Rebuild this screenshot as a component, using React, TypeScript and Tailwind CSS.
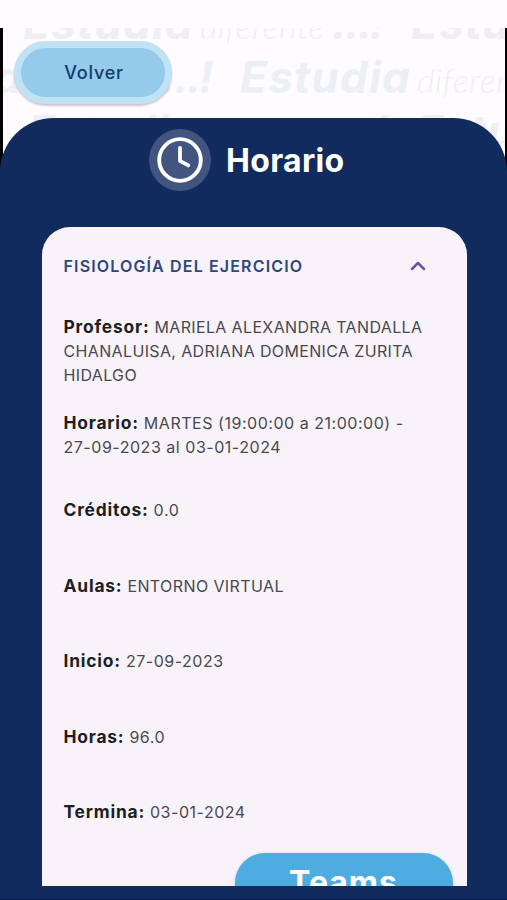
import React from "react";
import { ChevronUp } from "lucide-react";

type Detail = {
  label: string;
  lines: string[];
  className: string;
  textClassName: string;
};

type WatermarkRow = {
  id: number;
  className: string;
};

const details: Detail[] = [
  {
    label: "Profesor:",
    lines: [
      "MARIELA ALEXANDRA TANDALLA",
      "CHANALUISA, ADRIANA DOMENICA ZURITA",
      "HIDALGO",
    ],
    className: "h-24",
    textClassName: "tracking-[0.36px]",
  },
  {
    label: "Horario:",
    lines: ["MARTES (19:00:00 a 21:00:00) -", "27-09-2023 al 03-01-2024"],
    className: "h-[87px]",
    textClassName: "tracking-[0.53px]",
  },
  {
    label: "Créditos:",
    lines: ["0.0"],
    className: "h-[75.5px]",
    textClassName: "tracking-[0.6px]",
  },
  {
    label: "Aulas:",
    lines: ["ENTORNO VIRTUAL"],
    className: "h-[75.5px]",
    textClassName: "tracking-[0.4px]",
  },
  {
    label: "Inicio:",
    lines: ["27-09-2023"],
    className: "h-[75.5px]",
    textClassName: "tracking-[0.53px]",
  },
  {
    label: "Horas:",
    lines: ["96.0"],
    className: "h-[75.5px]",
    textClassName: "tracking-[0.53px]",
  },
  {
    label: "Termina:",
    lines: ["03-01-2024"],
    className: "h-[53px]",
    textClassName: "tracking-[0.53px]",
  },
];

const watermarkRows: WatermarkRow[] = [
  { id: 1, className: "-top-[32px] left-[20px] text-[#f0eef1]" },
  { id: 2, className: "top-[22px] -left-[151px] text-[#ebf0f6]" },
  { id: 3, className: "top-[76px] left-[25px] text-[#f0eef1]" },
];

const Watermark: React.FC = () => (
  <div className="absolute inset-0 overflow-hidden" aria-hidden="true">
    {watermarkRows.map((row) => (
      <div
        key={row.id}
        className={`absolute flex whitespace-nowrap leading-[54px] italic ${row.className}`}
      >
        {[0, 1].map((n) => (
          <div key={n} className="flex w-[388px] shrink-0 items-baseline">
            <span className="w-[177px] font-['Inter'] text-[44px] font-bold tracking-[1.2px]">
              Estudia
            </span>
            <span className="w-[132px] font-['Lato'] text-[34px] font-light tracking-[0.4px]">
              diferente
            </span>
            <span className="font-['Inter'] text-[44px] font-bold tracking-[-2px]">
              ...!
            </span>
          </div>
        ))}
      </div>
    ))}
  </div>
);

const ClockIcon: React.FC = () => (
  <div className="flex size-[62px] items-center justify-center rounded-full bg-[#415580]">
    <svg
      viewBox="0 0 46 46"
      className="size-[46px]"
      fill="none"
      stroke="white"
      strokeWidth="3.8"
      strokeLinecap="round"
      strokeLinejoin="round"
    >
      <circle cx="23" cy="23" r="20.8" />
      <path d="M23 11V23.8L31.3 28.4" />
    </svg>
  </div>
);

const App: React.FC = () => {
  return (
    <div className="flex h-[900px] w-[507px] flex-col overflow-hidden bg-[#fffbfe] font-['Inter',sans-serif]">
      <div className="h-7 shrink-0" />

      <div className="relative h-[90px] shrink-0 bg-black">
        <div className="absolute top-0 right-[2px] left-[3px] h-[90px] overflow-hidden bg-[#fffbfe]">
          <Watermark />
        </div>
        <button className="relative mt-[13px] ml-[14px] flex h-[63px] w-[158px] items-center justify-center rounded-full border-[7px] border-[#bfe2f4] bg-[#95caeb] pl-[2px] text-[18px] font-medium tracking-[0.8px] text-[#123a6b] shadow-[0_2px_2px_rgba(0,0,0,0.2)]">
          Volver
        </button>
      </div>

      <div className="relative flex flex-1 flex-col">
        <div className="absolute inset-x-0 top-0 h-14 bg-black" />
        <div className="absolute top-0 right-[2px] left-[3px] h-[45px] overflow-hidden bg-[#fffbfe]">
          <div className="relative -mt-[90px] h-[140px]">
            <Watermark />
          </div>
        </div>

        <main className="relative flex h-[782px] flex-col rounded-t-[54px] border-b border-[#0a1b40] bg-[#112b5f]">
          <header className="flex h-[109px] shrink-0 pt-[11px] pl-[149px]">
            <ClockIcon />
            <h1 className="ml-[15px] pt-px text-[32px] leading-[62px] font-bold tracking-[0.3px] text-white">
              Horario
            </h1>
          </header>

          <section className="ml-[41.5px] h-[659px] w-[425px] overflow-hidden rounded-t-[28px] bg-[#f7f3f9] px-[22px]">
            <div className="flex h-[88px] items-start justify-between pt-[27px] pr-[15px]">
              <h2 className="text-[16px] leading-6 font-semibold tracking-[1.15px] text-[#2f467c]">
                FISIOLOGÍA DEL EJERCICIO
              </h2>
              <ChevronUp className="size-6 text-[#6b52a8]" strokeWidth={2.5} />
            </div>

            {details.map((item) => (
              <div key={item.label} className={item.className}>
                {item.lines.map((line, index) => (
                  <p
                    key={line}
                    className={`text-[16px] leading-6 whitespace-nowrap text-[#4b4850] ${item.textClassName}`}
                  >
                    {index === 0 && (
                      <span className="text-[17.4px] font-bold tracking-[0.8px] text-[#201e25]">
                        {item.label}{" "}
                      </span>
                    )}
                    {line}
                  </p>
                ))}
              </div>
            ))}

            <button className="ml-[171px] flex h-[60px] w-[218px] items-center justify-center rounded-[30px] bg-[#4eace1] text-[32px] font-bold tracking-[1px] text-white shadow-[0_1px_3px_rgba(0,0,0,0.25)]">
              Teams
            </button>
          </section>
        </main>
      </div>
    </div>
  );
};

export default App;
